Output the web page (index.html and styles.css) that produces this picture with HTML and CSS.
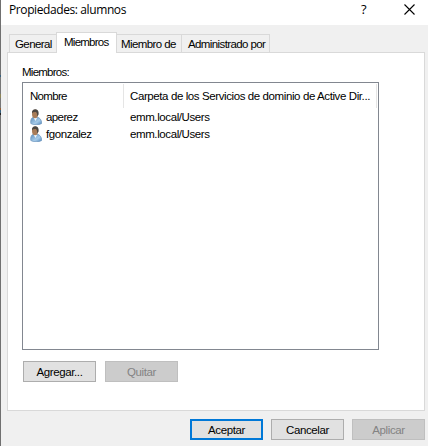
FILE: index.html
```html
<!DOCTYPE html>
<html lang="es">
<head>
<meta charset="utf-8">
<title>Propiedades: alumnos</title>
<link rel="stylesheet" href="styles.css">
</head>
<body>
<svg class="defs" width="0" height="0">
  <defs>
    <linearGradient id="coat" x1="0" y1="0" x2="1" y2="1"><stop offset="0" stop-color="#5d8fbd"/><stop offset=".6" stop-color="#a5cae8"/><stop offset="1" stop-color="#4f86bb"/></linearGradient>
    <symbol id="user" viewBox="0 0 12 16">
      <path d="M.8 14.500C.3 10.500 1.500 8.500 4 8h3c3 .8 4.700 3 4.700 6.500C9 16.300 3.500 16.300.8 14.500Z" fill="url(#coat)" stroke="#6b94bc" stroke-width=".7"/>
      <path d="M3.500 8.500 5.500 12 7.200 8.500Z" fill="#f4f8fb"/>
      <ellipse cx="5" cy="5" rx="3" ry="4.200" fill="#a87c58"/>
      <path d="M2 4.500C1.600 2 3 .3 5.300.3S9.200 2.400 8.500 5.800L7.200 7.500C7.300 4.800 6.800 3.500 5.800 3L3 3.200Z" fill="#4b4641"/>
    </symbol>
  </defs>
</svg>
<main class="dialog">
  <header class="titlebar">
    <h1 class="title">Propiedades: alumnos</h1>
    <span class="help">?</span>
    <svg class="close" width="11" height="11" viewBox="0 0 11 11"><path d="M.5.5l10 10M10.500.5l-10 10" fill="none" stroke="#000" stroke-width="1.100"/></svg>
  </header>
  <nav class="tabs">
    <span class="tab general">General</span>
    <span class="tab active">Miembros</span>
    <span class="tab memberof">Miembro de</span>
    <span class="tab managed">Administrado por</span>
  </nav>
  <section class="pane">
    <div class="label">Miembros:</div>
    <div class="list">
      <div class="row head"><span class="name">Nombre</span><span class="folder">Carpeta de los Servicios de dominio de Active Dir...</span></div>
      <div class="row"><span class="name"><svg class="icon"><use href="#user"/></svg><span class="short">aperez</span></span><span class="folder">emm.local/Users</span></div>
      <div class="row"><span class="name"><svg class="icon"><use href="#user"/></svg><span>fgonzalez</span></span><span class="folder">emm.local/Users</span></div>
    </div>
    <div class="actions"><button>Agregar...</button><button disabled>Quitar</button></div>
  </section>
  <footer class="footer"><button class="default">Aceptar</button><button>Cancelar</button><button disabled>Aplicar</button></footer>
</main>
</body>
</html>
```
FILE: styles.css
```css
* { box-sizing: border-box; }
body { margin: 0; width: 428px; height: 446px; overflow: hidden; background: #f0f0f0; color: #000; font: 11.5px/14px "Liberation Sans", Arial, sans-serif; letter-spacing: -.4px; white-space: nowrap; }
.defs { position: absolute; }
.dialog { height: 446px; padding-left: 1px; background: linear-gradient(#707070 75px, #38607c 75px 77px, #777 77px 94px, #8c8458 94px 98px, #777 98px 108px, #925d35 108px 110px, #38607c 110px 113px, #222 113px 115px, #707070 115px) left / 1px 100% no-repeat; display: flex; flex-direction: column; }
.titlebar { height: 25px; background: #fff; display: flex; padding-left: 8px; flex: none; }
.title { margin: 0; width: 352px; font: 12px/19px "Open Sans", sans-serif; letter-spacing: -.4px; }
.help { width: 43px; font: 13px/19px "Open Sans", sans-serif; }
.close { margin-top: 4px; }
.tabs { display: flex; align-items: flex-end; height: 27px; padding-left: 8px; flex: none; }
.tab { height: 18px; border: 1px solid #d9d9d9; border-bottom: 0; background: #f0f0f0; padding: 2px 0 0 5px; letter-spacing: -.6px; }
.general { width: 47px; border-right: 0; }
.active { width: 61px; height: 21px; margin-bottom: -1px; background: #fff; padding: 2px 0 0 7px; z-index: 1; letter-spacing: -.75px; }
.memberof { width: 65px; border-left: 0; padding-left: 4px; }
.managed { width: 88px; border-left: 0; padding-left: 6px; }
.pane { margin-left: 6px; width: 418px; height: 359px; border: 1px solid #d9d9d9; background: #fff; padding: 12px 0 0 14px; flex: none; }
.label { height: 17px; letter-spacing: -.75px; }
.list { width: 357px; height: 268px; border: 1px solid #828790; padding: 1px 0 0 0; }
.row { display: flex; height: 17px; line-height: 17px; }
.head { height: 24px; line-height: 24px; width: 354px; border-right: 1px solid #e5e5e5; margin-bottom: 1px; }
.name { width: 101px; padding-left: 7px; display: flex; flex: none; }
.head .name { border-right: 1px solid #e5e5e5; letter-spacing: -.7px; }
.short { letter-spacing: -.6px; }
.icon { width: 12px; height: 16px; margin-right: 4px; }
.folder { padding-left: 6px; }
.actions { display: flex; gap: 9px; margin: 11px 0 0 1px; }
button { width: 73px; height: 21px; padding: 0; border: 1px solid #adadad; background: #e1e1e1; color: #000; font: inherit; letter-spacing: inherit; }
button:disabled { background: #ccc; border-color: #bfbfbf; color: #838383; }
.default { border: 2px solid #0078d7; }
.footer { display: flex; gap: 8px; margin: 8px 0 0 189px; }
```
